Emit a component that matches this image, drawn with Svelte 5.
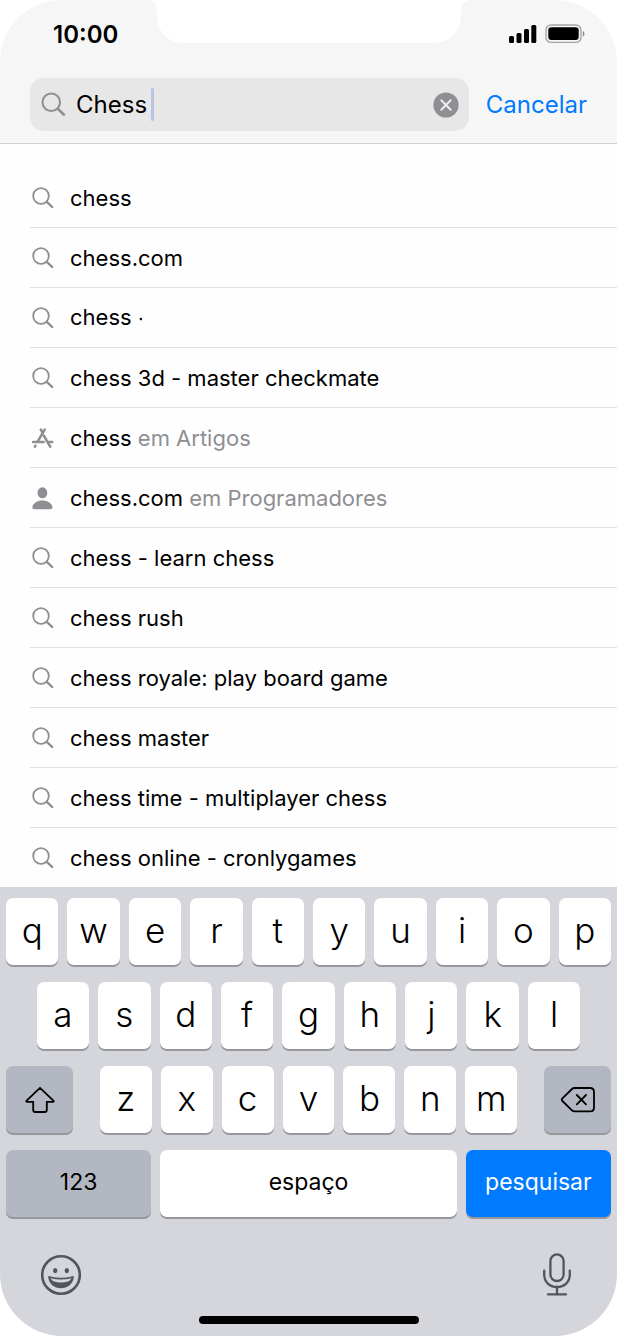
<script lang="ts">
  interface Suggestion {
    term: string;
    scope?: string;
    icon: 'search' | 'apps' | 'person';
  }

  const suggestions: Suggestion[] = [
    { term: 'chess', icon: 'search' },
    { term: 'chess.com', icon: 'search' },
    { term: 'chess ∙', icon: 'search' },
    { term: 'chess 3d - master checkmate', icon: 'search' },
    { term: 'chess', scope: 'em Artigos', icon: 'apps' },
    { term: 'chess.com', scope: 'em Programadores', icon: 'person' },
    { term: 'chess - learn chess', icon: 'search' },
    { term: 'chess rush', icon: 'search' },
    { term: 'chess royale: play board game', icon: 'search' },
    { term: 'chess master', icon: 'search' },
    { term: 'chess time - multiplayer chess', icon: 'search' },
    { term: 'chess online - cronlygames', icon: 'search' },
  ];

  const topRow = [...'qwertyuiop'];
  const middleRow = [...'asdfghjkl'];
  const bottomRow = [...'zxcvbnm'];

  let query = $state('Chess');

  function type(text: string) {
    query += text;
  }

  function erase() {
    query = query.slice(0, -1);
  }
</script>

{#snippet magnifier()}
  <svg class="glyph" viewBox="0 0 24 24" aria-hidden="true">
    <circle cx="10" cy="10" r="7.8" fill="none" stroke="currentColor" stroke-width="1.8" />
    <path d="M15.8 15.8 L21.2 21" fill="none" stroke="currentColor" stroke-width="2.4" stroke-linecap="round" />
  </svg>
{/snippet}

{#snippet letter(char: string)}
  <button class="key letter" type="button" onclick={() => type(char)}>{char}</button>
{/snippet}

<div class="phone">
  <header>
    <svg class="notch" viewBox="0 0 324 44" aria-hidden="true">
      <path
        d="M0 0 H324 C316 0 314 5 314 13 C314 32 304 43 286 43 H38 C20 43 10 32 10 13 C10 5 8 0 0 0 Z"
        fill="#fff"
      />
    </svg>

    <div class="status">
      <time>10:00</time>
      <svg class="indicators" viewBox="0 0 78 20" aria-hidden="true">
        <rect x="1" y="12" width="5" height="7" rx="1.5" />
        <rect x="8.5" y="9" width="5" height="10" rx="1.5" />
        <rect x="16" y="5" width="5" height="14" rx="1.5" />
        <rect x="23.3" y="1" width="5" height="18" rx="1.5" />
        <rect x="38" y="1" width="35" height="17.4" rx="5" fill="none" stroke="#a5a5a5" stroke-width="1.4" />
        <rect x="40.3" y="3.3" width="30.4" height="12.8" rx="3" />
        <path d="M74.8 7 C77 8 77 11.6 74.8 12.6 Z" fill="#8c8c8c" />
      </svg>
    </div>

    <form class="search" role="search" onsubmit={(e) => e.preventDefault()}>
      <div class="field">
        {@render magnifier()}
        <input type="text" aria-label="Buscar" bind:value={query} />
        <span class="caret"></span>
        <button class="clear" type="button" aria-label="Limpar" onclick={() => (query = '')}>
          <svg viewBox="0 0 26 26" aria-hidden="true">
            <circle cx="13" cy="13" r="12.6" fill="#8e8e93" />
            <path d="M8.3 8.3 L17.7 17.7 M17.7 8.3 L8.3 17.7" stroke="#eee" stroke-width="2" stroke-linecap="round" />
          </svg>
        </button>
      </div>
      <button class="cancel" type="button">Cancelar</button>
    </form>
  </header>

  <ul class="suggestions">
    {#each suggestions as item}
      <li>
        <button type="button" onclick={() => (query = item.term)}>
          {#if item.icon === 'search'}
            {@render magnifier()}
          {:else if item.icon === 'apps'}
            <svg class="glyph" viewBox="0 0 24 24" aria-hidden="true">
              <g fill="none" stroke="currentColor" stroke-width="2.6" stroke-linecap="round">
                <path d="M13.7 3.6 L6.6 15.6" />
                <path d="M9.8 3.6 L11.4 6.4" />
                <path d="M12.8 9.6 L19.2 20.6" />
                <path d="M2.2 16 H12.6 M18 16 H21.2" />
                <path d="M4.4 19.8 L3.9 20.7" />
              </g>
            </svg>
          {:else}
            <svg class="glyph" viewBox="0 0 24 24" aria-hidden="true">
              <ellipse cx="11.4" cy="6.8" rx="4.9" ry="5.5" fill="currentColor" />
              <path d="M3.4 23.2 C1.8 23.2 1.2 22.4 1.4 21 C2.2 16.8 6.4 14.4 11.4 14.4 C16.4 14.4 20.6 16.8 21.4 21 C21.6 22.4 21 23.2 19.4 23.2 Z" fill="currentColor" />
            </svg>
          {/if}
          <span>{item.term}{#if item.scope}<span class="scope">&nbsp;{item.scope}</span>{/if}</span>
        </button>
      </li>
    {/each}
  </ul>

  <section class="keyboard" aria-label="Teclado">
    <div class="row">
      {#each topRow as char}{@render letter(char)}{/each}
    </div>
    <div class="row">
      {#each middleRow as char}{@render letter(char)}{/each}
    </div>
    <div class="row split">
      <button class="key side" type="button" aria-label="Maiúsculas">
        <svg width="32" height="28" viewBox="0 0 32 28" aria-hidden="true">
          <path
            d="M16 1.8 L29.4 14.6 Q30.4 15.8 29 15.8 H22.8 V24 Q22.8 26 20.8 26 H11.2 Q9.2 26 9.2 24 V15.8 H3 Q1.6 15.8 2.6 14.6 Z"
            fill="none"
            stroke="#000"
            stroke-width="1.8"
            stroke-linejoin="round"
          />
        </svg>
      </button>
      <div class="row letters">
        {#each bottomRow as char}{@render letter(char)}{/each}
      </div>
      <button class="key side" type="button" aria-label="Apagar" onclick={erase}>
        <svg width="36" height="28" viewBox="0 0 36 28" aria-hidden="true">
          <g fill="none" stroke="#000" stroke-width="1.8" stroke-linejoin="round" stroke-linecap="round">
            <path d="M14.6 2 H30 Q34 2 34 6 V21.4 Q34 25.4 30 25.4 H14.6 Q13 25.4 12 24.4 L2.4 15 Q1.2 13.7 2.4 12.4 L12 3 Q13 2 14.6 2 Z" />
            <path d="M16.8 9 L26 18.4 M26 9 L16.8 18.4" />
          </g>
        </svg>
      </button>
    </div>
    <div class="row">
      <button class="key word mode" type="button">123</button>
      <button class="key word space" type="button" onclick={() => type(' ')}>espaço</button>
      <button class="key word go" type="button">pesquisar</button>
    </div>

    <div class="tools">
      <button type="button" aria-label="Emoji">
        <svg width="42" height="42" viewBox="0 0 42 42" aria-hidden="true">
          <circle cx="21" cy="21" r="18.8" fill="none" stroke="currentColor" stroke-width="2.6" />
          <ellipse cx="15.2" cy="16.6" rx="2.2" ry="2.6" fill="currentColor" />
          <ellipse cx="26.8" cy="16.6" rx="2.2" ry="2.6" fill="currentColor" />
          <path d="M9.6 22.2 Q21 25.4 32.4 22.2 Q34 21.8 33.8 23.4 C32.8 30 27.6 34.2 21 34.2 C14.4 34.2 9.2 30 8.2 23.4 Q8 21.8 9.6 22.2 Z" fill="currentColor" />
          <path d="M10.6 24.2 Q21 27 31.4 24.2 Q30.4 26.4 28.6 27.2 Q21 30 13.4 27.2 Q11.6 26.4 10.6 24.2 Z" fill="#d5d6dc" />
        </svg>
      </button>
      <button type="button" aria-label="Ditar">
        <svg width="30" height="44" viewBox="0 0 30 44" aria-hidden="true">
          <g fill="none" stroke="currentColor" stroke-width="2.3" stroke-linecap="round">
            <rect x="8.4" y="1.4" width="13.2" height="26.6" rx="6.6" />
            <path d="M2.2 17.6 V21.4 C2.2 29 7.6 34 15 34 C22.4 34 27.8 29 27.8 21.4 V17.6" />
            <path d="M15 34 V41.4 M6 41.4 H24" />
          </g>
        </svg>
      </button>
    </div>
    <div class="home"></div>
  </section>
</div>

<style>
  :global(body) {
    margin: 0;
    background: #fff;
  }

  .phone {
    display: flex;
    flex-direction: column;
    height: 100vh;
    overflow: hidden;
    border-radius: 62px;
    background: #fefefe;
    color: #000;
    font-family: Inter, 'Liberation Sans', sans-serif;
    font-size: 22px;
  }

  button,
  input {
    margin: 0;
    padding: 0;
    border: 0;
    background: none;
    color: inherit;
    font: inherit;
  }

  svg {
    display: block;
    flex: none;
  }

  header {
    position: relative;
    border-bottom: 1px solid #cfcfcf;
    background: #f6f6f6;
  }

  /* Sensor housing, centred over the status bar. */
  .notch {
    position: absolute;
    top: 0;
    left: 50%;
    width: 324px;
    transform: translateX(-50%);
  }

  .status {
    display: flex;
    align-items: center;
    justify-content: space-between;
    height: 68px;
    padding: 0 31px 0 53px;
  }

  time {
    font-size: 24px;
    font-weight: 600;
  }

  .indicators {
    width: 78px;
    height: 20px;
  }

  .search {
    display: flex;
    align-items: center;
    gap: 17px;
    padding: 10px 30px 12px;
  }

  .field {
    display: flex;
    flex: 1;
    align-items: center;
    min-width: 0;
    height: 53px;
    padding: 0 10px;
    box-sizing: border-box;
    border-radius: 14px;
    background: #e7e7e8;
    font-size: 24px;
  }

  .glyph {
    width: 24px;
    height: 24px;
    color: #8e8e93;
  }

  .field .glyph {
    width: 27px;
    height: 27px;
  }

  input {
    field-sizing: content;
    max-width: 80%;
    margin-left: 9px;
    outline: none;
    caret-color: transparent;
  }

  .caret {
    width: 3px;
    height: 33px;
    margin-left: 4px;
    border-radius: 2px;
    background: #bcc4e6;
  }

  .clear {
    width: 26px;
    height: 26px;
    margin-left: auto;
  }

  .cancel {
    color: #007aff;
    font-size: 24px;
  }

  .suggestions {
    flex: 1;
    min-height: 0;
    margin: 0;
    padding: 24px 0 0 30px;
    overflow: hidden;
    list-style: none;
  }

  .suggestions li {
    height: 60px;
    box-sizing: border-box;
    border-bottom: 1px solid #dfdfe0;
  }

  .suggestions li:last-child {
    border-bottom: 0;
  }

  .suggestions button {
    display: flex;
    align-items: center;
    gap: 15px;
    width: 100%;
    height: 100%;
    padding-left: 1px;
    text-align: left;
    white-space: nowrap;
  }

  .scope {
    color: #8e8e93;
  }

  .keyboard {
    display: flex;
    flex-direction: column;
    gap: 17px;
    padding: 11px 6px 12px;
    background: #d5d6dc;
  }

  .row {
    display: flex;
    justify-content: center;
    gap: 9px;
  }

  .row.split {
    justify-content: space-between;
    gap: 0;
  }

  .row.letters {
    width: 69%;
  }

  .key {
    height: 67px;
    border-radius: 7px;
    background: #fff;
    box-shadow: 0 2px 0 #97989d;
  }

  .letter {
    width: calc((100% - 81px) / 10);
    padding-bottom: 4px;
    font-size: 35px;
    font-weight: 300;
  }

  .letters .letter {
    flex: 1;
  }

  .side,
  .mode {
    background: #b2b7c2;
  }

  .side {
    display: flex;
    align-items: center;
    justify-content: center;
    width: 67px;
  }

  .word {
    flex: 0 0 24%;
    padding-bottom: 4px;
    font-size: 23px;
  }

  .space {
    flex: 1;
  }

  .go {
    background: #007aff;
    color: #fff;
  }

  .tools {
    display: flex;
    align-items: center;
    justify-content: space-between;
    padding: 19px 39px 0 34px;
    color: #50555e;
  }

  .home {
    align-self: center;
    width: 220px;
    height: 8px;
    margin-top: 2px;
    border-radius: 4px;
    background: #000;
  }
</style>
